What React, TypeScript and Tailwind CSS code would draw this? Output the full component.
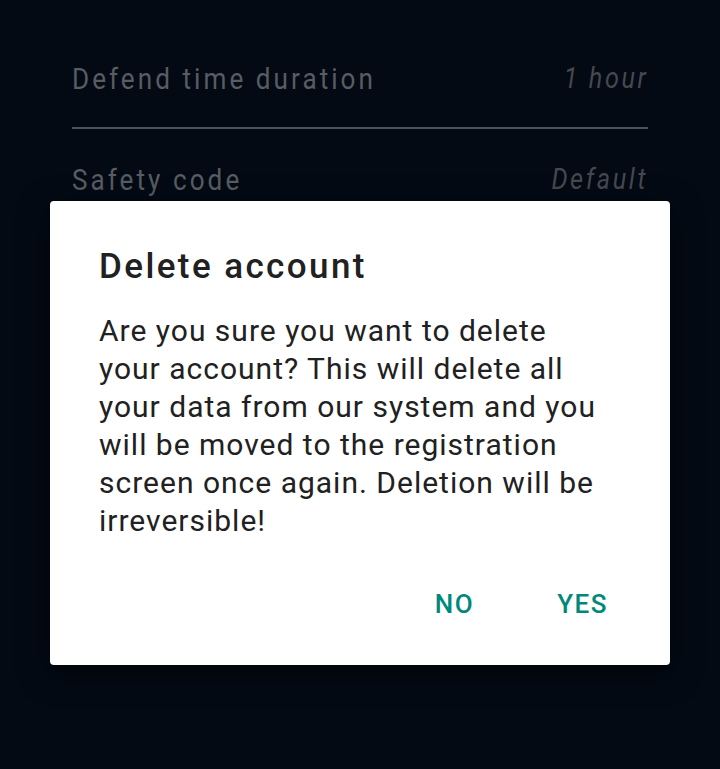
const rows = [
  { label: "Defend time duration", value: "1 hour" },
  { label: "Safety code", value: "Default" },
];

const App = () => {
  return (
    <div
      className="relative h-[769px] w-[720px] overflow-hidden bg-[#030a14]"
      style={{ fontFamily: "Roboto, 'Noto Sans', sans-serif" }}
    >
      <div className="px-[72px] pt-[53px]">
        {rows.map((row, i) => (
          <div key={row.label}>
            <div className="flex h-[50px] items-center justify-between">
              <span className="origin-left scale-x-[0.87] whitespace-nowrap text-[30px] tracking-[3.5px] text-[#585c63]">
                {row.label}
              </span>
              <span className="mt-[2px] origin-right scale-x-[0.87] whitespace-nowrap text-[29px] italic tracking-[3px] text-[#45494f]">
                {row.value}
              </span>
            </div>
            {i === 0 && <div className="mb-[25px] mt-[24px] h-[2px] bg-[#4d5159]" />}
          </div>
        ))}
      </div>

      {/* dialog */}
      <div className="absolute left-[50px] top-[201px] w-[620px] rounded-[4px] bg-white pl-[49px] pr-[66px] pt-[44px] pb-[43px] shadow-[0_8px_30px_rgba(0,0,0,0.5)]">
        <h2 className="text-[35px] font-medium leading-[44px] tracking-[2.4px] text-[#212121]">
          Delete account
        </h2>
        <p className="mt-[23px] text-[30px] leading-[38px] tracking-[1px] text-[#212121]">
          Are you sure you want to delete your account? This will delete all your data from our
          system and you will be moved to the registration screen once again. Deletion will be
          irreversible!
        </p>
        <div className="-mr-[26px] mt-[46px] flex justify-end gap-[83px] pr-[22px]">
          <button className="text-[26px] font-medium leading-[36px] tracking-[1.5px] text-[#00897b]">NO</button>
          <button className="text-[26px] font-medium leading-[36px] tracking-[1.5px] text-[#00897b]">YES</button>
        </div>
      </div>
    </div>
  );
};

export default App;
